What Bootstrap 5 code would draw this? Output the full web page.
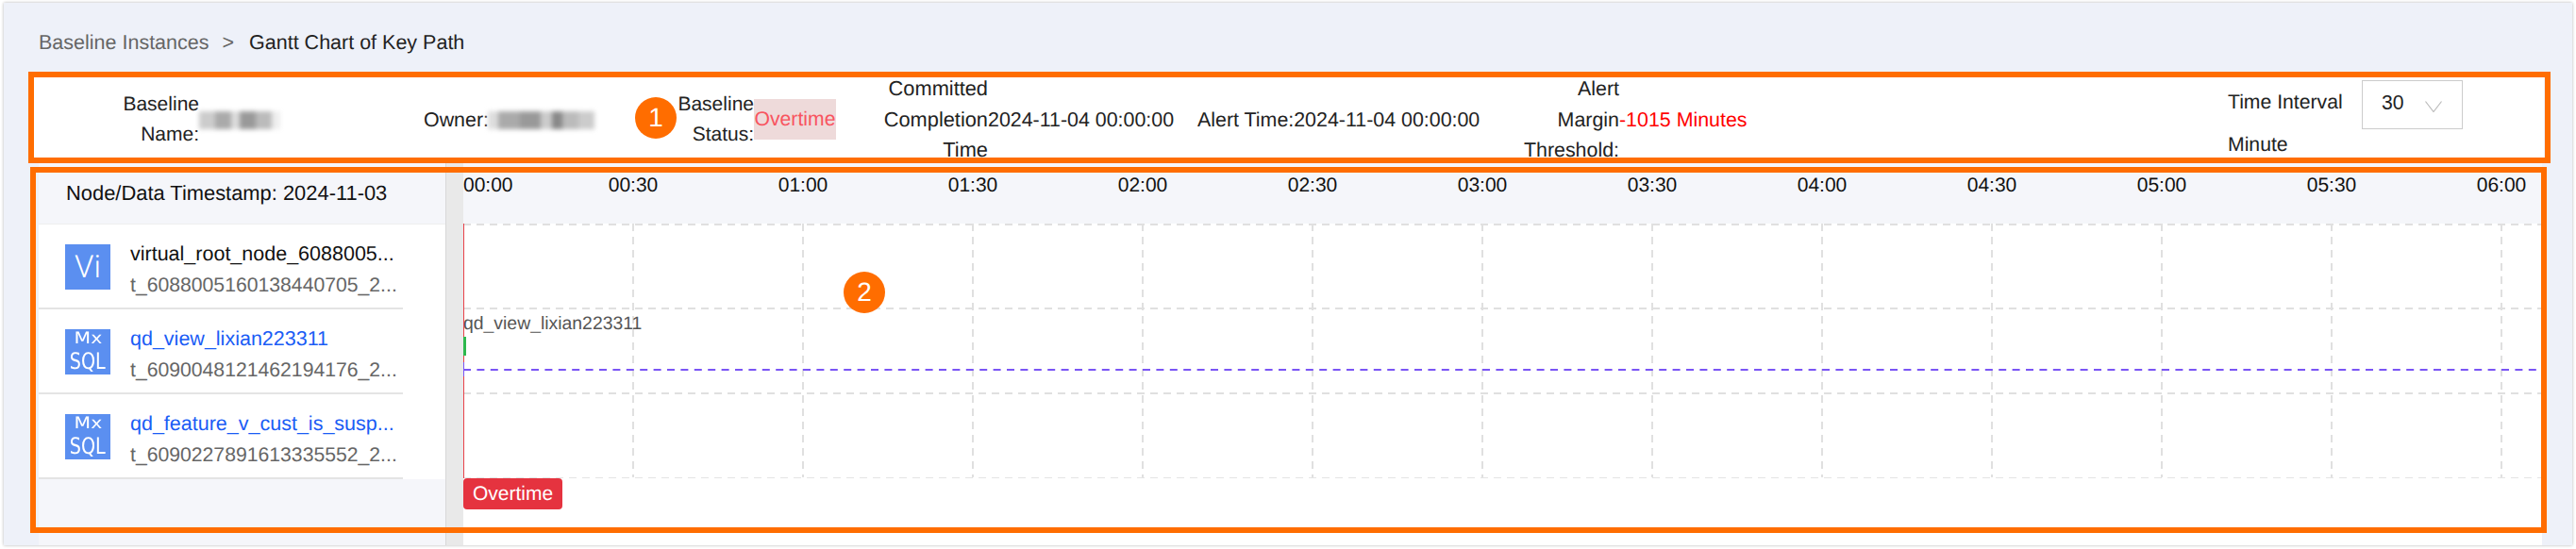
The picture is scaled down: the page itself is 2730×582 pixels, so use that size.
<!DOCTYPE html>
<html lang="en">
<head>
<meta charset="utf-8">
<title>Gantt Chart of Key Path</title>
<link href="https://cdn.jsdelivr.net/npm/bootstrap@5.3.0/dist/css/bootstrap.min.css" rel="stylesheet">
<style>
html,body{margin:0;height:582px;overflow:hidden;background:#fff;}
body{font-family:"Liberation Sans",Arial,sans-serif;font-size:21.2px;color:#222;text-rendering:geometricPrecision;}
.shell{margin:3px 0 0 4px;width:2722px;height:575px;background:#eef1f9;box-shadow:0 0 3px rgba(0,0,0,.3);position:relative;}
.crumbs{height:73px;padding:11px 0 0 37px;}
.crumbs .breadcrumb{--bs-breadcrumb-divider:">";--bs-breadcrumb-margin-bottom:0;--bs-breadcrumb-item-padding-x:14px;font-size:21.5px;}
.crumbs .breadcrumb-item{color:#222;}
.crumbs .breadcrumb-item a{color:#666;text-decoration:none;}
.crumbs .breadcrumb-item+.breadcrumb-item::before{color:#666;padding-right:16px;}
.infobar{margin-left:32px;width:2660px;height:94px;padding-top:8px;background:#fff;line-height:32.5px;font-size:21.4px;}
.fitem{flex:none;}
.flabel{text-align:right;flex:none;font-size:21px;}
.nw{white-space:nowrap;}
.i1{margin-left:94px;width:167px}.i1 .flabel{width:81px}
.i2{margin-left:152px;width:181px}.i2 .flabel{width:68px;font-size:21.4px}
.i3{margin-left:88px;width:168px}.i3 .flabel{width:81px}
.i4{margin-left:50px;width:310px}.i4 .flabel{width:111px;font-size:21.8px}
.i5{margin-left:23px;width:301px}
.i6{margin-left:43px;width:242px}.i6 .flabel{width:103px;font-size:21.4px}
.smudge{display:block;height:19px;filter:blur(2.5px);}
.sm1{width:86px;background:linear-gradient(90deg,#ccc 0 20%,#aaa 20% 40%,#ddd 40% 50%,#999 50% 70%,#bbb 70% 90%,#eee 90%);}
.sm2{width:113px;background:linear-gradient(90deg,#ddd 0 10%,#aaa 10% 30%,#999 30% 50%,#ccc 50% 60%,#888 60% 70%,#bbb 70% 85%,#ccc 85%);}
.late{background:#eedada;color:#f8545f;height:43px;line-height:43px;margin-top:-2px;width:87px;text-align:center;white-space:nowrap;font-size:21.2px;}
.redval{color:#f00;}
.interval{width:260px;margin:1px 0 0 506px;align-self:flex-start;font-size:21.2px;}
.interval .tlabel{width:142px;line-height:48px;}
.interval .form-select{width:107px;height:52px;border:1px solid #ccc;border-radius:0;padding:0 0 4px 20px;font-size:21.2px;color:#222;box-shadow:none;background-position:66px 21px;background-size:18px 12px;background-image:url("data:image/svg+xml,%3Csvg xmlns='http://www.w3.org/2000/svg' viewBox='0 0 18 12'%3E%3Cpath d='M.5.5 9 11.5 17.5.5' fill='none' stroke='%23bbb' stroke-width='1.2'/%3E%3C/svg%3E");}
.interval .tmin{width:100%;line-height:32px;margin-top:1px;}
.mainwrap{margin:1px 0 0 37px;width:2653px;height:407px;}
.leftpane{width:431px;background:#f5f6fa;flex:none;}
.lefthead{height:67px;padding:3px 0 0 29px;color:#111;border-bottom:1px solid #eee;font-size:21.9px;}
.noderow{height:90px;background:#fff;padding-left:28px;}
.nodeinner{height:90px;width:358px;}
.rowline{width:386px;height:2px;background:#e4e4e4;margin-top:-2px;margin-left:-28px;position:relative;}
.nodeicon{width:48px;height:48px;background:#5b8ff0;color:#fff;flex:none;margin-right:21px;overflow:hidden;}
.ic-vi{font-family:Roboto,sans-serif;font-weight:300;font-size:33px;line-height:1;}
.ic-mx{font-family:"DejaVu Sans",sans-serif;font-size:17px;line-height:20px;transform:scaleX(1.2);}
.ic-sql{font-family:"DejaVu Sans",sans-serif;font-size:24px;line-height:28px;transform:scaleX(.8);}
.ntext{margin-top:6px;}
.nname{line-height:33px;color:#111;white-space:nowrap;font-size:21.5px;}
.nname.linked{color:#1a5cf5;}
.nsub{line-height:33px;color:#666;white-space:nowrap;font-size:21.2px;}
.splitter{width:19px;background:#e9e9e9;border-left:1px solid #d8d8d8;flex:none;}
.chartpane{width:2203px;flex:none;background:#fff;}
.timehead{height:66px;background:#f5f6fa;padding-top:14px;overflow:hidden;color:#111;line-height:24px;font-size:21px;}
.tcell{width:180px;flex:none;text-align:center;}
.tcell.first{width:90px;text-align:left;}
.canvas{position:relative;height:341px;}
.canvas svg{display:block;}
.barlabel{position:absolute;left:0;top:93px;color:#555;font-size:19.4px;line-height:26px;white-space:nowrap;}
.overbadge.badge{position:absolute;left:0;top:270px;width:105px;height:33px;background:#e5333f;color:#fff;font-size:21px;font-weight:400;line-height:33px;padding:0;border-radius:4px;}
.annot{position:absolute;border:6px solid #ff6d00;pointer-events:none;}
.a1{left:26px;top:73px;width:2673px;height:97px;}
.a2{left:28px;top:174px;width:2667px;height:388px;}
.pin{position:absolute;width:44px;height:44px;border-radius:50%;background:#ff6d00;color:#fff;font-size:28px;line-height:44px;text-align:center;}
.p1{left:669px;top:100px;}
.p2{left:890px;top:285px;}
</style>
</head>
<body>
<div class="shell">
  <nav class="crumbs d-flex align-items-center" aria-label="breadcrumb">
    <ol class="breadcrumb">
      <li class="breadcrumb-item"><a href="#">Baseline Instances</a></li>
      <li class="breadcrumb-item active text-reset">Gantt Chart of Key Path</li>
    </ol>
  </nav>

  <div class="infobar d-flex align-items-center">
    <div class="fitem i1 d-flex align-items-center"><div class="flabel">Baseline Name:</div><span class="smudge sm1"></span></div>
    <div class="fitem i2 d-flex align-items-center"><div class="flabel nw">Owner:</div><span class="smudge sm2"></span></div>
    <div class="fitem i3 d-flex align-items-center"><div class="flabel">Baseline Status:</div><span class="late">Overtime</span></div>
    <div class="fitem i4 d-flex align-items-center"><div class="flabel">Committed Completion Time</div><span class="nw">2024-11-04 00:00:00</span></div>
    <div class="fitem i5 nw">Alert Time:2024-11-04 00:00:00</div>
    <div class="fitem i6 d-flex align-items-center"><div class="flabel">Alert Margin Threshold:</div><span class="nw redval">-1015 Minutes</span></div>
    <div class="fitem interval d-flex flex-wrap">
      <span class="tlabel nw">Time Interval</span>
      <select class="form-select" aria-label="Time Interval"><option>30</option></select>
      <span class="tmin">Minute</span>
    </div>
  </div>

  <div class="mainwrap d-flex">
    <div class="leftpane">
      <div class="lefthead d-flex align-items-center">Node/Data Timestamp: 2024-11-03</div>
      <div class="noderow">
        <div class="nodeinner d-flex align-items-center">
          <div class="nodeicon d-flex align-items-center justify-content-center ic-vi">Vi</div>
          <div class="ntext"><div class="nname">virtual_root_node_6088005...</div><div class="nsub">t_6088005160138440705_2...</div></div>
        </div>
        <div class="rowline"></div>
      </div>
      <div class="noderow">
        <div class="nodeinner d-flex align-items-center">
          <div class="nodeicon d-flex flex-column align-items-center justify-content-center"><span class="ic-mx">Mx</span><span class="ic-sql">SQL</span></div>
          <div class="ntext"><div class="nname linked">qd_view_lixian223311</div><div class="nsub">t_6090048121462194176_2...</div></div>
        </div>
        <div class="rowline"></div>
      </div>
      <div class="noderow">
        <div class="nodeinner d-flex align-items-center">
          <div class="nodeicon d-flex flex-column align-items-center justify-content-center"><span class="ic-mx">Mx</span><span class="ic-sql">SQL</span></div>
          <div class="ntext"><div class="nname linked">qd_feature_v_cust_is_susp...</div><div class="nsub">t_6090227891613335552_2...</div></div>
        </div>
        <div class="rowline"></div>
      </div>
    </div>
    <div class="splitter"></div>
    <div class="chartpane">
      <div class="timehead d-flex">
        <div class="tcell first">00:00</div>
        <div class="tcell">00:30</div><div class="tcell">01:00</div><div class="tcell">01:30</div><div class="tcell">02:00</div><div class="tcell">02:30</div><div class="tcell">03:00</div><div class="tcell">03:30</div><div class="tcell">04:00</div><div class="tcell">04:30</div><div class="tcell">05:00</div><div class="tcell">05:30</div><div class="tcell">06:00</div>
      </div>
      <div class="canvas">
        <svg width="2203" height="341" viewBox="0 0 2203 341" aria-hidden="true">
          <g stroke="#e0e0e0" stroke-width="2" stroke-dasharray="8 6" fill="none">
            <path d="M0 1H2203M0 90H2203M0 180H2203"/>
            <path d="M180 0V269M360 0V269M540 0V269M720 0V269M900 0V269M1080 0V269M1260 0V269M1440 0V269M1620 0V269M1800 0V269M1980 0V269M2160 0V269"/>
          </g>
          <path d="M0 269.5H2203" stroke="#e4e4e4" stroke-width="1" stroke-dasharray="8 6" fill="none"/>
          <path d="M.5 0V270" stroke="#e8434b" stroke-width="1" fill="none"/>
          <rect x="0" y="120" width="3" height="20" fill="#2db84d"/>
          <path d="M.5 147V162" stroke="#7a55f5" stroke-width="1" fill="none"/>
          <path d="M0 155H2197" stroke="#7a55f5" stroke-width="2" stroke-dasharray="8 6.4" fill="none"/>
        </svg>
        <div class="barlabel">qd_view_lixian223311</div>
        <span class="badge overbadge">Overtime</span>
      </div>
    </div>
  </div>

  <div class="annot a1"></div>
  <div class="annot a2"></div>
  <div class="pin p1">1</div>
  <div class="pin p2">2</div>
</div>
<script src="https://cdn.jsdelivr.net/npm/bootstrap@5.3.0/dist/js/bootstrap.bundle.min.js"></script>
</body>
</html>
